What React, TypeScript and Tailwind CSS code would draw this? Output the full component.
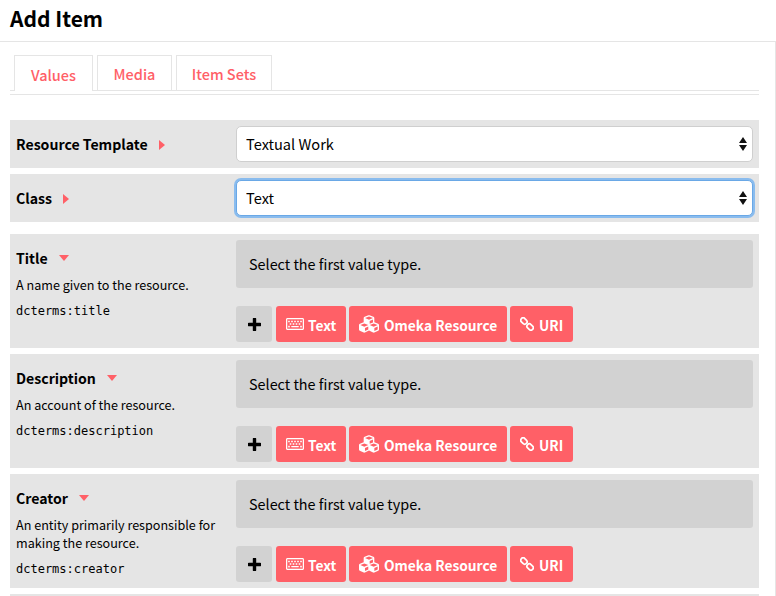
import React from "react";
import { FaRegKeyboard, FaCubes } from "react-icons/fa";

const sans = "font-['Noto_Sans_CJK_SC','Liberation_Sans',sans-serif]";

function Arrows() {
  return (
    <svg width="8" height="14" viewBox="0 0 8 14" className="absolute right-[6px] top-1/2 -translate-y-1/2 pointer-events-none">
      <path d="M4 0 L8 6 L0 6 Z M4 14 L8 8 L0 8 Z" fill="#111" />
    </svg>
  );
}

function LinkIcon() {
  return (
    <svg width="14" height="14" viewBox="0 0 14 14" fill="none" stroke="#fff" strokeWidth="1.7">
      <rect x="0.4" y="1.6" width="7" height="4.8" rx="2.4" transform="rotate(45 3.9 4)" />
      <rect x="6.6" y="7.6" width="7" height="4.8" rx="2.4" transform="rotate(45 10.1 10)" />
    </svg>
  );
}

function PlusIcon() {
  return (
    <svg width="13" height="13" viewBox="0 0 13 13">
      <path d="M6.5 1 V12 M1 6.5 H12" stroke="#000" strokeWidth="3.4" strokeLinecap="round" fill="none" />
    </svg>
  );
}

function Tab({ label, active, w }: { label: string; active?: boolean; w: string }) {
  return (
    <div className={`${w} pt-[2px] border border-[#e5e5e5] border-b-0 flex items-center justify-center text-[#ff6067] text-[14.5px] font-medium ${active ? "bg-white relative z-10 h-[36px]" : "h-[35px]"}`}>
      {label}
    </div>
  );
}

function SelectRow({ label, value, focus }: { label: string; value: string; focus?: boolean }) {
  return (
    <div className="h-[48px] bg-[#e5e5e5] flex items-center pl-[6px] pr-[6px]">
      <div className="w-[220px] pt-[2px] flex items-center gap-[11px] font-semibold text-[14.1px] text-black">
        <span>{label}</span>
        <svg width="6" height="10" viewBox="0 0 6 10"><path d="M0 0 L6 5 L0 10 Z" fill="#ff6067" /></svg>
      </div>
      <div className="relative flex-1">
        <select
          defaultValue={value}
          className={`w-full h-[36px] appearance-none bg-white pl-[9px] text-[14.6px] text-black rounded-[5px] outline-none ${
            focus ? "border border-[#6aa8e6] shadow-[0_0_0_2px_#8abcee] rounded-[3px]" : "border border-[#cfcfcf]"
          }`}
        >
          <option>{value}</option>
        </select>
        <Arrows />
      </div>
    </div>
  );
}

function Btn({ icon, label, gap, w }: { icon: React.ReactNode; label: string; gap: string; w: string }) {
  return (
    <div className={`${w} h-[36px] bg-[#ff6067] rounded-[3px] pl-[10px] flex items-center ${gap} text-white text-[13.75px] font-semibold`}>
      {icon}
      <span className="pt-[2px]">{label}</span>
    </div>
  );
}

function Property({ title, desc, term }: { title: string; desc: React.ReactNode; term: string }) {
  return (
    <div className="h-[114px] bg-[#e5e5e5] flex pl-[6px] pr-[6px] pt-[6px]">
      <div className="w-[220px] text-black pt-[6px]">
        <div className="flex items-center gap-[11px] font-semibold text-[14.1px] leading-[24px]">
          <span>{title}</span>
          <svg width="10" height="6" viewBox="0 0 10 6"><path d="M0 0 L10 0 L5 6 Z" fill="#ff6067" /></svg>
        </div>
        <div className="text-[12.6px] leading-[18px] mt-[6px] pr-[14px]">{desc}</div>
        <div className="font-['DejaVu_Sans_Mono',monospace] text-[12px] leading-[18px] mt-[8px]">{term}</div>
      </div>
      <div className="flex-1 flex flex-col">
        <div className="h-[48px] bg-[#d2d2d2] rounded-[3px] flex items-center pl-[13px] text-[14.4px] text-black">
          Select the first value type.
        </div>
        <div className="flex gap-[3px] mt-[18px]">
          <div className="w-[36px] h-[36px] mr-px bg-[#d2d2d2] rounded-[3px] flex items-center justify-center">
            <PlusIcon />
          </div>
          <Btn w="w-[70px]" icon={<FaRegKeyboard size={18} />} label="Text" gap="gap-[4px]" />
          <Btn w="w-[158px]" icon={<FaCubes size={20} />} label="Omeka Resource" gap="gap-[5px]" />
          <Btn w="w-[63px]" icon={<LinkIcon />} label="URI" gap="gap-[5px]" />
        </div>
      </div>
    </div>
  );
}

export default function App() {
  return (
    <div className={`${sans} w-[776px] h-[596px] overflow-hidden bg-white text-black`}>
      <div className="h-[42px] border-b border-[#e5e5e5] pl-[10px] pb-[5px] flex items-center">
        <h1 className="text-[21px] font-semibold leading-[36px]">Add Item</h1>
      </div>
      <div className="border-r border-[#e5e5e5] h-[554px] pl-[10px] pr-[16px] pt-[13px]">
        <div className="h-[40px] border-b border-[#e5e5e5]">
          <div className="flex gap-[4px] pl-[4px] border-b border-[#e5e5e5] h-[36px]">
            <Tab label="Values" active w="w-[79px]" />
            <Tab label="Media" w="w-[75px]" />
            <Tab label="Item Sets" w="w-[96px]" />
          </div>
        </div>
        <div className="mt-[25px] flex flex-col">
          <SelectRow label="Resource Template" value="Textual Work" />
          <div className="h-[6px]" />
          <SelectRow label="Class" value="Text" focus />
          <div className="h-[12px]" />
          <div className="flex flex-col gap-[6px]">
            <Property title="Title" desc="A name given to the resource." term="dcterms:title" />
            <Property title="Description" desc="An account of the resource." term="dcterms:description" />
            <Property title="Creator" desc={<>An entity primarily responsible for making the resource.</>} term="dcterms:creator" />
            <div className="h-[2px] bg-[#e5e5e5]" />
          </div>
        </div>
      </div>
    </div>
  );
}
